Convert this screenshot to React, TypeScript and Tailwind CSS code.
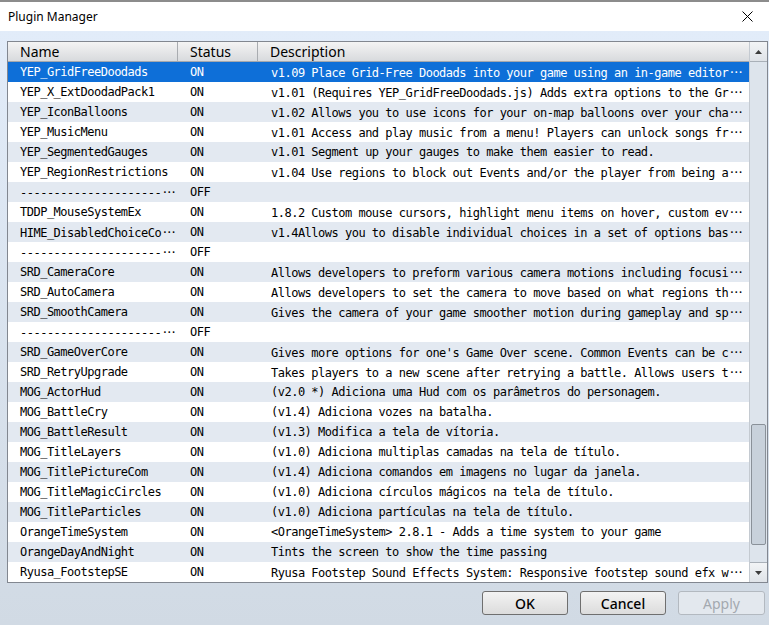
import React from "react";

type Plugin = { name: string; status: string; desc: string; cutName?: boolean; cutDesc?: boolean };

const plugins: Plugin[] = [
  { name: "YEP_GridFreeDoodads", status: "ON", desc: "v1.09 Place Grid-Free Doodads into your game using an in-game editor", cutDesc: true },
  { name: "YEP_X_ExtDoodadPack1", status: "ON", desc: "v1.01 (Requires YEP_GridFreeDoodads.js) Adds extra options to the Gr", cutDesc: true },
  { name: "YEP_IconBalloons", status: "ON", desc: "v1.02 Allows you to use icons for your on-map balloons over your cha", cutDesc: true },
  { name: "YEP_MusicMenu", status: "ON", desc: "v1.01 Access and play music from a menu! Players can unlock songs fr", cutDesc: true },
  { name: "YEP_SegmentedGauges", status: "ON", desc: "v1.01 Segment up your gauges to make them easier to read." },
  { name: "YEP_RegionRestrictions", status: "ON", desc: "v1.04 Use regions to block out Events and/or the player from being a", cutDesc: true },
  { name: "---------------------", status: "OFF", desc: "", cutName: true },
  { name: "TDDP_MouseSystemEx", status: "ON", desc: "1.8.2 Custom mouse cursors, highlight menu items on hover, custom ev", cutDesc: true },
  { name: "HIME_DisabledChoiceCo", status: "ON", desc: "v1.4Allows you to disable individual choices in a set of options bas", cutName: true, cutDesc: true },
  { name: "---------------------", status: "OFF", desc: "", cutName: true },
  { name: "SRD_CameraCore", status: "ON", desc: "Allows developers to preform various camera motions including focusi", cutDesc: true },
  { name: "SRD_AutoCamera", status: "ON", desc: "Allows developers to set the camera to move based on what regions th", cutDesc: true },
  { name: "SRD_SmoothCamera", status: "ON", desc: "Gives the camera of your game smoother motion during gameplay and sp", cutDesc: true },
  { name: "---------------------", status: "OFF", desc: "", cutName: true },
  { name: "SRD_GameOverCore", status: "ON", desc: "Gives more options for one's Game Over scene. Common Events can be c", cutDesc: true },
  { name: "SRD_RetryUpgrade", status: "ON", desc: "Takes players to a new scene after retrying a battle. Allows users t", cutDesc: true },
  { name: "MOG_ActorHud", status: "ON", desc: "(v2.0 *) Adiciona uma Hud com os parâmetros do personagem." },
  { name: "MOG_BattleCry", status: "ON", desc: "(v1.4) Adiciona vozes na batalha." },
  { name: "MOG_BattleResult", status: "ON", desc: "(v1.3) Modifica a tela de vítoria." },
  { name: "MOG_TitleLayers", status: "ON", desc: "(v1.0) Adiciona multiplas camadas na tela de título." },
  { name: "MOG_TitlePictureCom", status: "ON", desc: "(v1.4) Adiciona comandos em imagens no lugar da janela." },
  { name: "MOG_TitleMagicCircles", status: "ON", desc: "(v1.0) Adiciona círculos mágicos na tela de título." },
  { name: "MOG_TitleParticles", status: "ON", desc: "(v1.0) Adiciona partículas na tela de título." },
  { name: "OrangeTimeSystem", status: "ON", desc: "<OrangeTimeSystem> 2.8.1 - Adds a time system to your game" },
  { name: "OrangeDayAndNight", status: "ON", desc: "Tints the screen to show the time passing" },
  { name: "Ryusa_FootstepSE", status: "ON", desc: "Ryusa Footstep Sound Effects System: Responsive footstep sound efx w", cutDesc: true },
];

const mono = "font-['DejaVu_Sans_Mono',monospace] text-[12px] tracking-[-0.5px]";
const ui = "font-['Noto_Sans',sans-serif]";

const Ell = () => (
  <span className="inline-block w-[16px] text-center font-['Noto_Sans_CJK_JP',sans-serif] text-[13px] tracking-normal">⋯</span>
);

const Button = ({ label, disabled }: { label: string; disabled?: boolean }) => (
  <button
    className={
      disabled
        ? `h-[24px] w-[87px] rounded-[3px] border border-[#b3b9c0] bg-[#e3e8ee] text-[14px] text-[#a3a9b0] ${ui}`
        : `h-[24px] w-[86px] rounded-[3px] border border-[#6f6f6f] bg-gradient-to-b from-[#f3f3f3] to-[#dcdcdc] text-[14px] font-medium text-black ${ui}`
    }
  >
    {label}
  </button>
);

export default function App() {
  return (
    <div className="flex h-[625px] w-[769px] flex-col overflow-hidden bg-white">
      <div className="h-[2px] bg-[#8c8c8c]" />
      <div className="flex h-[29px] items-center justify-between bg-white pl-[8px] pr-[16px]">
        <span className={`text-[12px] text-black ${ui}`}>Plugin Manager</span>
        <svg width="11" height="11" viewBox="0 0 11 11">
          <path d="M0.5 0.5 L10.5 10.5 M10.5 0.5 L0.5 10.5" stroke="#000" strokeWidth="1" />
        </svg>
      </div>

      <div className="flex flex-1 flex-col bg-gradient-to-b from-[#e2ecf9] to-[#d1dae4] pl-[7px] pr-[1px] pt-[10px]">
        <div className="flex h-[542px] border border-[#828790] bg-white">
          <div className="flex flex-1 flex-col">
            <div className={`flex h-[20px] border-b border-[#a5a8ad] bg-gradient-to-b from-[#f4f4f4] to-[#d8dadd] text-[14px] leading-[19px] text-black ${ui}`}>
              <div className="w-[170px] border-r border-[#a9acb0] pl-[12px]">Name</div>
              <div className="w-[80px] border-r border-[#a9acb0] pl-[12px]">Status</div>
              <div className="flex-1 pl-[12px]">Description</div>
            </div>
            {plugins.map((p, i) => {
              const bg = i === 0 ? "bg-[#0e6fd8] text-white" : i % 2 === 0 ? "bg-[#e3e9f1] text-black" : "bg-white text-black";
              return (
                <div key={i} className={`flex h-[20px] items-center whitespace-nowrap ${bg} ${mono}`}>
                  <div className="w-[171px] overflow-hidden pl-[12px]">
                    {p.name}
                    {p.cutName && <Ell />}
                  </div>
                  <div className="w-[80px] pl-[11px]">{p.status}</div>
                  <div className="flex-1 overflow-hidden pl-[12px]">
                    {p.desc}
                    {p.cutDesc && <Ell />}
                  </div>
                </div>
              );
            })}
          </div>

          <div className="flex w-[18px] flex-col border-l border-[#c4cad1] bg-[#dde4ec]">
            <div className="flex h-[20px] items-center justify-center border-b border-[#a9b0b8] bg-gradient-to-b from-[#f2f4f6] to-[#dfe3e8]">
              <svg width="7" height="4" viewBox="0 0 7 4">
                <path d="M0 4 L3.5 0 L7 4 Z" fill="#3c3c3c" />
              </svg>
            </div>
            <div className="flex flex-1 flex-col justify-end px-[1px] pb-[17px]">
              <div className="h-[121px] rounded-[2px] border border-[#8a9199] bg-[#c8d1db]" />
            </div>
            <div className="flex h-[20px] items-center justify-center border-t border-[#a9b0b8] bg-gradient-to-b from-[#f2f4f6] to-[#dfe3e8]">
              <svg width="7" height="4" viewBox="0 0 7 4">
                <path d="M0 0 L3.5 4 L7 0 Z" fill="#3c3c3c" />
              </svg>
            </div>
          </div>
        </div>

        <div className="mt-[8px] flex justify-end gap-[12px] pr-[3px]">
          <Button label="OK" />
          <Button label="Cancel" />
          <Button label="Apply" disabled />
        </div>
      </div>
    </div>
  );
}
